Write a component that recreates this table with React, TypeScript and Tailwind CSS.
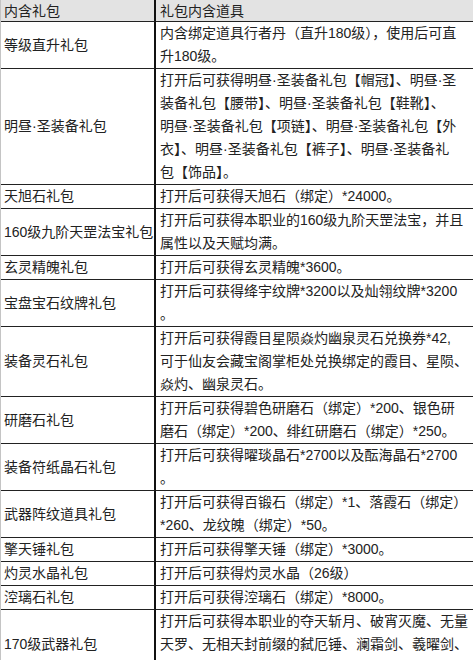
const rows: { name: string; lines: string[] }[] = [
  { name: "等级直升礼包", lines: ["内含绑定道具行者丹（直升180级），使用后可直", "升180级。"] },
  {
    name: "明昼·圣装备礼包",
    lines: [
      "打开后可获得明昼·圣装备礼包【帽冠】、明昼·圣",
      "装备礼包【腰带】、明昼·圣装备礼包【鞋靴】、",
      "明昼·圣装备礼包【项链】、明昼·圣装备礼包【外",
      "衣】、明昼·圣装备礼包【裤子】、明昼·圣装备礼",
      "包【饰品】。",
    ],
  },
  { name: "天旭石礼包", lines: ["打开后可获得天旭石（绑定）*24000。"] },
  { name: "160级九阶天罡法宝礼包", lines: ["打开后可获得本职业的160级九阶天罡法宝，并且", "属性以及天赋均满。"] },
  { name: "玄灵精魄礼包", lines: ["打开后可获得玄灵精魄*3600。"] },
  { name: "宝盘宝石纹牌礼包", lines: ["打开后可获得绛宇纹牌*3200以及灿翎纹牌*3200", "。"] },
  {
    name: "装备灵石礼包",
    lines: [
      "打开后可获得霞目星陨焱灼幽泉灵石兑换券*42,",
      "可于仙友会藏宝阁掌柜处兑换绑定的霞目、星陨、",
      "焱灼、幽泉灵石。",
    ],
  },
  { name: "研磨石礼包", lines: ["打开后可获得碧色研磨石（绑定）*200、银色研", "磨石（绑定）*200、绯红研磨石（绑定）*250。"] },
  { name: "装备符纸晶石礼包", lines: ["打开后可获得曜琰晶石*2700以及酝海晶石*2700", "。"] },
  { name: "武器阵纹道具礼包", lines: ["打开后可获得百锻石（绑定）*1、落霞石（绑定）", "*260、龙纹魄（绑定）*50。"] },
  { name: "擎天锤礼包", lines: ["打开后可获得擎天锤（绑定）*3000。"] },
  { name: "灼灵水晶礼包", lines: ["打开后可获得灼灵水晶（26级）"] },
  { name: "涳璃石礼包", lines: ["打开后可获得涳璃石（绑定）*8000。"] },
  {
    name: "170级武器礼包",
    lines: [
      "打开后可获得本职业的夺天斩月、破宵灭魔、无量",
      "天罗、无相天封前缀的弑厄锤、澜霜剑、羲曜剑、",
      "星辰弓、幽冥刃、天机扇、玄冰杖。",
    ],
  },
];

export default function App() {
  return (
    <div
      className="w-[473px] h-[660px] overflow-hidden bg-white text-[14px] text-[#222]"
      style={{ fontFamily: '"Liberation Sans", "Noto Sans CJK SC", sans-serif' }}
    >
      <div className="grid grid-cols-[155px_1fr] border-l border-[#c4c4c4]">
        <div className="h-[22px] leading-[22px] pl-[3px] bg-[#e3e3e3] border-b border-[#222] border-r-2 border-r-[#111]">
          内含礼包
        </div>
        <div className="h-[22px] leading-[22px] pl-[4px] bg-[#e3e3e3] border-b border-[#222]">礼包内含道具</div>
        {rows.map((r) => (
          <Row key={r.name} name={r.name} lines={r.lines} />
        ))}
      </div>
    </div>
  );
}

function Row({ name, lines }: { name: string; lines: string[] }) {
  return (
    <>
      <div className="flex items-center pl-[3px] border-b border-[#222] border-r-2 border-r-[#111] whitespace-nowrap overflow-hidden">
        {name}
      </div>
      <div className="pl-[4px] border-b border-[#222] leading-[23px] whitespace-nowrap">
        {lines.map((l, i) => (
          <div key={i}>{l}</div>
        ))}
      </div>
    </>
  );
}
